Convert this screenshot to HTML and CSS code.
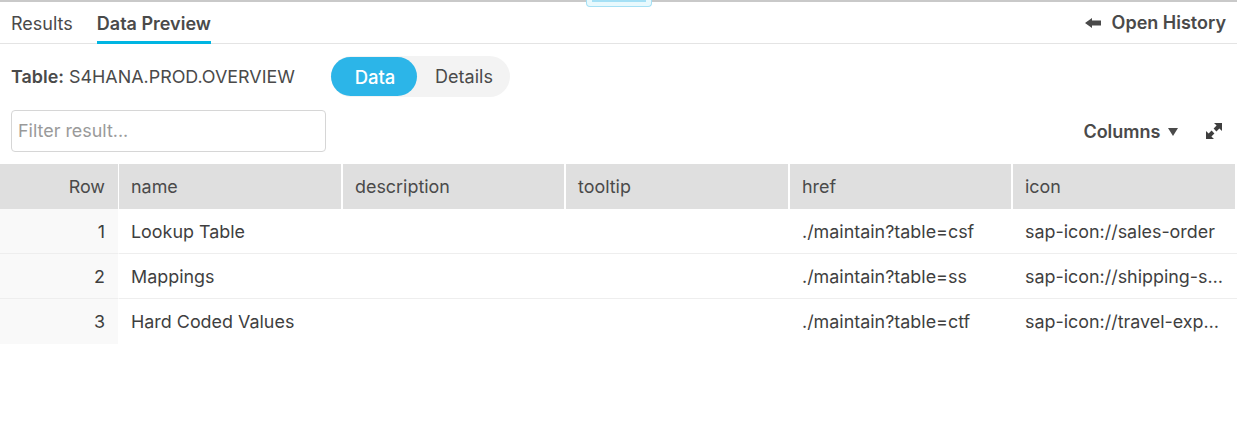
FILE: index.html
```html
<!DOCTYPE html>
<html lang="en">
<head>
<meta charset="utf-8">
<title>Data Preview</title>
<link rel="stylesheet" href="styles.css">
</head>
<body>
<div class="splitter"><span class="handle"></span></div>
<header class="tabs">
  <nav class="tab-list">
    <span class="tab">Results</span>
    <span class="tab active">Data Preview</span>
  </nav>
  <div class="history">
    <svg class="arrow" width="16" height="10" viewBox="0 0 16 10"><path d="M0 5 L7 0 V2.6 H16 V7.4 H7 V10 Z" fill="#4a4a4a"/></svg>
    <span>Open History</span>
  </div>
</header>
<section class="table-line">
  <div class="table-name"><b>Table:</b> S4HANA.PROD.OVERVIEW</div>
  <div class="toggle"><span class="toggle-item on">Data</span><span class="toggle-item">Details</span></div>
</section>
<section class="filter-line">
  <input class="filter" placeholder="Filter result...">
  <div class="tools">
    <span class="columns">Columns <i class="caret"></i></span>
    <svg class="expand" width="16" height="16" viewBox="0 0 16 16"><path d="M8 0H16V8L13.4 5.4 10.4 8.4 7.6 5.6 10.6 2.6Z M8 16H0V8L2.6 10.6 5.6 7.6 8.4 10.4 5.4 13.4Z" fill="#3f3f3f"/></svg>
  </div>
</section>
<div class="grid">
  <div class="cell head num">Row</div><div class="cell head">name</div><div class="cell head">description</div><div class="cell head">tooltip</div><div class="cell head">href</div><div class="cell head">icon</div>
  <div class="cell num">1</div><div class="cell">Lookup Table</div><div class="cell"></div><div class="cell"></div><div class="cell">./maintain?table=csf</div><div class="cell">sap-icon://sales-order</div>
  <div class="cell num">2</div><div class="cell">Mappings</div><div class="cell"></div><div class="cell"></div><div class="cell">./maintain?table=ss</div><div class="cell">sap-icon://shipping-status</div>
  <div class="cell num last">3</div><div class="cell last">Hard Coded Values</div><div class="cell last"></div><div class="cell last"></div><div class="cell last">./maintain?table=ctf</div><div class="cell last">sap-icon://travel-expense</div>
</div>
</body>
</html>
```
FILE: styles.css
```css
* { box-sizing: border-box; }
html, body { margin: 0; height: 100%; background: #fff; overflow: hidden; }
body { font-family: Inter, "Liberation Sans", sans-serif; color: #4a4a4a; font-size: 17.92px; }
.splitter { height: 2px; background: #c9c9c9; position: relative; }
.handle { width: 66px; height: 7px; background: #e8f9fd; border: 1px solid #a5e0f5; border-top: 0; border-radius: 0 0 4px 4px; position: absolute; top: 0; left: 586px; }
.handle::before { content: ""; position: absolute; top: 0; left: 5px; right: 5px; height: 2px; background: #a5e0f5; }
.tabs { height: 42px; display: flex; justify-content: space-between; border-bottom: 1px solid #e4e4e4; padding: 0 11px 0 11px; font-size: 18px; }
.tab-list { display: flex; gap: 24px; }
.tab { height: 42px; line-height: 44px; }
.tab.active { font-weight: 600; border-bottom: 3px solid #00b5e2; }
.history { display: flex; align-items: center; gap: 11px; font-weight: 600; }
.table-line { display: flex; align-items: flex-start; height: 66px; padding: 12px 0 0 11px; }
.table-name { width: 320px; white-space: nowrap; line-height: 41px; }
.table-name b { font-weight: 600; }
.toggle { display: flex; background: #f3f3f3; border-radius: 21px; height: 41px; width: 179px; font-size: 18px; }
.toggle-item { display: flex; align-items: center; justify-content: center; width: 93px; height: 39px; margin-top: 1px; padding-left: 1px; }
.toggle-item.on { width: 86px; background: #2cb5e8; color: #fff; border-radius: 20px; font-weight: 500; font-size: 18.5px; padding-left: 2px; }
.filter-line { display: flex; justify-content: space-between; align-items: center; height: 42px; padding: 0 15px 0 11px; }
.filter { width: 315px; height: 42px; border: 1px solid #d6d6d6; border-radius: 4px; font: 17.92px Inter, sans-serif; padding: 0 0 2px 6px; }
.filter::placeholder { color: #9a9a9a; }
.tools { display: flex; align-items: center; gap: 28px; font-size: 18px; }
.columns { font-weight: 600; }
.caret { display: inline-block; border: 5px solid transparent; border-top: 8px solid #4a4a4a; border-bottom: 0; margin-left: 3px; vertical-align: 2px; }
.grid { display: grid; grid-template-columns: 119px 224px 223px 224px 223px 224px; margin-top: 12px; }
.cell { height: 45px; line-height: 45px; padding: 0 10px 0 12px; border-bottom: 1px solid #eee; color: #3f3f3f; white-space: nowrap; overflow: hidden; text-overflow: ellipsis; }
.head { background: #dfdfdf; border-bottom: 0; border-right: 2px solid #fff; color: #4a4a4a; }
.head:last-child { border-right: 0; }
.num { background: #f9f9f9; text-align: right; padding-right: 13px; border-right: 1px solid #fff; }
.head.num { background: #dfdfdf; border-right-width: 1px; }
.last { border-bottom: 0; }
```
